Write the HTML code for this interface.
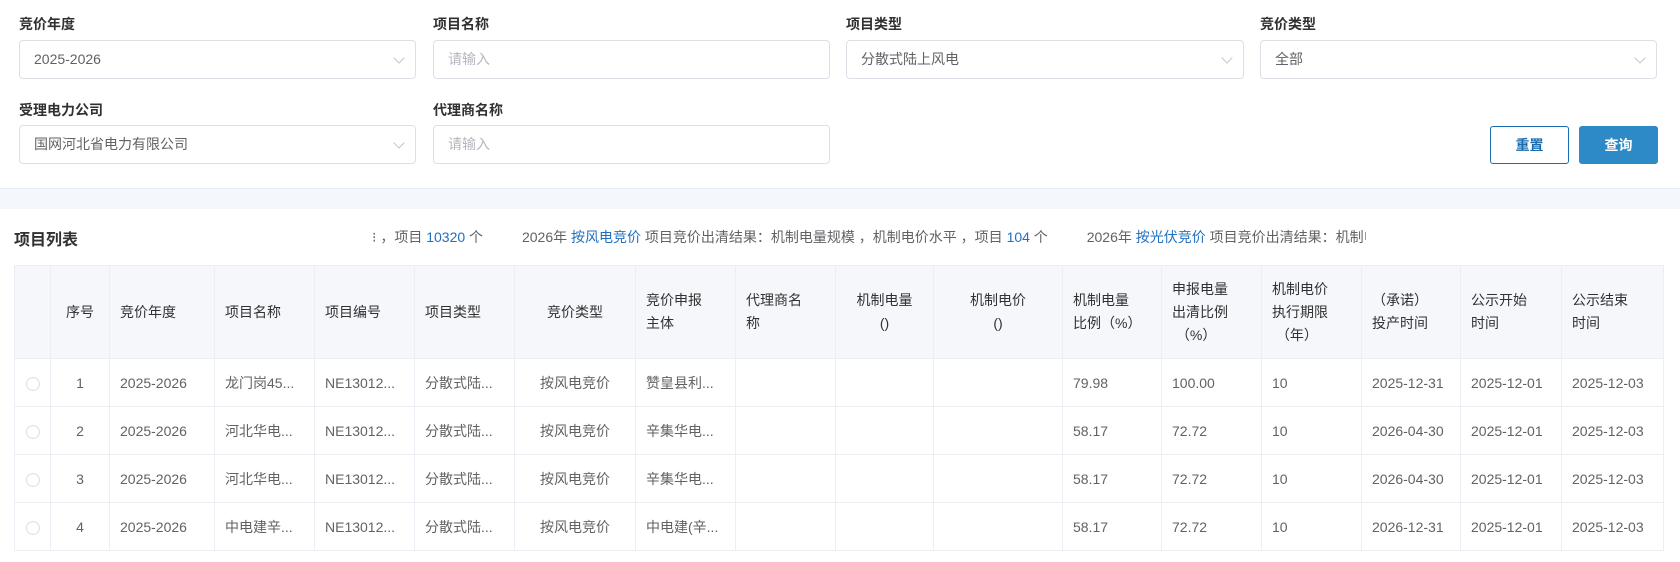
<!DOCTYPE html>
<html><head><meta charset="utf-8"><style>
*{box-sizing:border-box;margin:0;padding:0}
body{width:1680px;height:562px;background:#fff;font-family:"Liberation Sans","Noto Sans CJK SC",sans-serif;font-size:14px;color:#606266;position:relative;overflow:hidden}
.lbl{position:absolute;font-weight:bold;color:#303133;font-size:14px}
.inp{position:absolute;height:39px;border:1px solid #dcdfe6;border-radius:4px;padding-left:14px;line-height:37px;font-size:14px;color:#606266}
.ph{color:#b4b7bd}
.arr{position:absolute;right:12px;top:13px;width:8px;height:8px;border-right:1px solid #c0c4cc;border-bottom:1px solid #c0c4cc;transform:rotate(45deg)}
.btn{position:absolute;top:126px;height:38px;width:79px;border-radius:3px;text-align:center;line-height:36px;font-size:14px;font-weight:bold}
.band{position:absolute;left:0;top:188px;width:1680px;height:21px;background:#f4f7fb;border-top:1px solid #e8edf3}
.title{position:absolute;left:14px;top:226px;font-size:16px;font-weight:bold;color:#303133}
.mq{position:absolute;left:372px;top:227px;width:994px;overflow:hidden;white-space:nowrap;font-size:14px;color:#606266}
.b{color:#1f6fbf}
table{position:absolute;left:14px;top:265px;border-collapse:collapse;table-layout:fixed;width:1649px}
td,th{border:1px solid #ebeef5;font-weight:normal;white-space:nowrap;overflow:hidden}
th{background:#f5f7fa;height:93px;color:#303133;font-size:14px;line-height:23px;text-align:left;padding-left:10px;vertical-align:middle;white-space:normal}
td{height:48px;padding-left:10px;font-size:14px}
.c{text-align:center;padding-left:0}
.rd{display:inline-block;width:14px;height:14px;border:1px solid #dcdfe6;border-radius:50%;vertical-align:middle}
</style></head><body>
<div class="lbl" style="left:19px;top:14px">竞价年度</div>
<div class="lbl" style="left:433px;top:14px">项目名称</div>
<div class="lbl" style="left:846px;top:14px">项目类型</div>
<div class="lbl" style="left:1260px;top:14px">竞价类型</div>
<div class="inp" style="left:19px;top:40px;width:397px">2025-2026<span class="arr"></span></div>
<div class="inp ph" style="left:433px;top:40px;width:397px">请输入</div>
<div class="inp" style="left:846px;top:40px;width:398px">分散式陆上风电<span class="arr"></span></div>
<div class="inp" style="left:1260px;top:40px;width:397px">全部<span class="arr"></span></div>
<div class="lbl" style="left:19px;top:100px">受理电力公司</div>
<div class="lbl" style="left:433px;top:100px">代理商名称</div>
<div class="inp" style="left:19px;top:125px;width:397px">国网河北省电力有限公司<span class="arr"></span></div>
<div class="inp ph" style="left:433px;top:125px;width:397px">请输入</div>
<div class="btn" style="left:1490px;border:1px solid #1a6cb0;color:#1a6cb0;background:#fff">重置</div>
<div class="btn" style="left:1579px;background:#2d8ac7;color:#fff;border:1px solid #2d8ac7">查询</div>
<div class="band"></div>
<div class="title">项目列表</div>
<div class="mq">⁝ ，项目 <span class="b">10320</span> 个&nbsp;&nbsp;&nbsp;&nbsp;&nbsp;&nbsp;&nbsp;&nbsp;&nbsp;&nbsp;2026年 <span class="b">按风电竞价</span> 项目竞价出清结果：机制电量规模 ，机制电价水平 ，项目 <span class="b">104</span> 个&nbsp;&nbsp;&nbsp;&nbsp;&nbsp;&nbsp;&nbsp;&nbsp;&nbsp;&nbsp;2026年 <span class="b">按光伏竞价</span> 项目竞价出清结果：机制电量规模</div>
<table>
<colgroup><col style="width:36px"><col style="width:59px"><col style="width:105px"><col style="width:100px"><col style="width:100px"><col style="width:100px"><col style="width:121px"><col style="width:100px"><col style="width:100px"><col style="width:98px"><col style="width:129px"><col style="width:99px"><col style="width:100px"><col style="width:100px"><col style="width:99px"><col style="width:101px"><col style="width:102px"></colgroup>
<tr><th></th><th class="c">序号</th><th>竞价年度</th><th>项目名称</th><th>项目编号</th><th>项目类型</th><th class="c">竞价类型</th><th>竞价申报<br>主体</th><th>代理商名<br>称</th><th class="c">机制电量<br>()</th><th class="c">机制电价<br>()</th><th>机制电量<br>比例（%）</th><th>申报电量<br>出清比例<br>&nbsp;（%）</th><th>机制电价<br>执行期限<br>&nbsp;（年）</th><th>（承诺）<br>投产时间</th><th>公示开始<br>时间</th><th>公示结束<br>时间</th></tr>
<tr><td class="c"><span class="rd"></span></td><td class="c">1</td><td>2025-2026</td><td>龙门岗45...</td><td>NE13012...</td><td>分散式陆...</td><td class="c">按风电竞价</td><td>赞皇县利...</td><td></td><td></td><td></td><td>79.98</td><td>100.00</td><td>10</td><td>2025-12-31</td><td>2025-12-01</td><td>2025-12-03</td></tr>
<tr><td class="c"><span class="rd"></span></td><td class="c">2</td><td>2025-2026</td><td>河北华电...</td><td>NE13012...</td><td>分散式陆...</td><td class="c">按风电竞价</td><td>辛集华电...</td><td></td><td></td><td></td><td>58.17</td><td>72.72</td><td>10</td><td>2026-04-30</td><td>2025-12-01</td><td>2025-12-03</td></tr>
<tr><td class="c"><span class="rd"></span></td><td class="c">3</td><td>2025-2026</td><td>河北华电...</td><td>NE13012...</td><td>分散式陆...</td><td class="c">按风电竞价</td><td>辛集华电...</td><td></td><td></td><td></td><td>58.17</td><td>72.72</td><td>10</td><td>2026-04-30</td><td>2025-12-01</td><td>2025-12-03</td></tr>
<tr><td class="c"><span class="rd"></span></td><td class="c">4</td><td>2025-2026</td><td>中电建辛...</td><td>NE13012...</td><td>分散式陆...</td><td class="c">按风电竞价</td><td>中电建(辛...</td><td></td><td></td><td></td><td>58.17</td><td>72.72</td><td>10</td><td>2026-12-31</td><td>2025-12-01</td><td>2025-12-03</td></tr>
</table>
</body></html>
